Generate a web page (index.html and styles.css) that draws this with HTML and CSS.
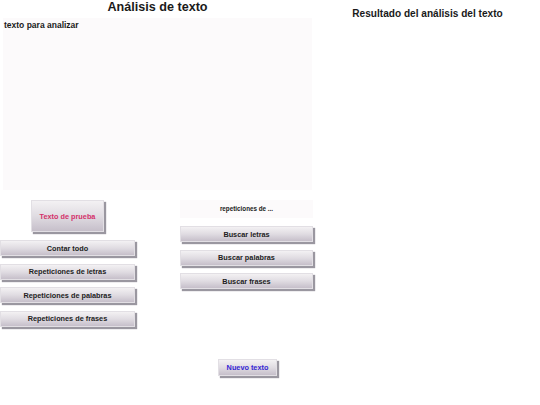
FILE: index.html
```html
<!DOCTYPE html>
<html lang="es">
<head>
<meta charset="utf-8">
<title>Análisis de texto</title>
<link rel="stylesheet" href="styles.css">
</head>
<body>
<div class="page">
  <section class="left">
    <h1 class="title">Análisis de texto</h1>
    <textarea class="input">texto para analizar</textarea>
    <div class="controls">
      <div class="col col-a">
        <button class="btn btn-sample">Texto de prueba</button>
        <button class="btn btn-wide">Contar todo</button>
        <button class="btn btn-wide">Repeticiones de letras</button>
        <button class="btn btn-wide">Repeticiones de palabras</button>
        <button class="btn btn-wide">Repeticiones de frases</button>
      </div>
      <div class="col col-b">
        <div class="field">repeticiones de ...</div>
        <button class="btn btn-wide">Buscar letras</button>
        <button class="btn btn-wide">Buscar palabras</button>
        <button class="btn btn-wide">Buscar frases</button>
        <button class="btn btn-new">Nuevo texto</button>
      </div>
    </div>
  </section>
  <section class="right">
    <h2 class="result-title">Resultado del análisis del texto</h2>
  </section>
</div>
</body>
</html>
```

FILE: styles.css
```css
* { box-sizing: border-box; }
html, body {
  margin: 0;
  padding: 0;
  background: #ffffff;
  font-family: "Liberation Sans", Arial, sans-serif;
  color: #1a1a1a;
}
.page {
  display: flex;
  width: 540px;
  height: 405px;
}
.left {
  width: 315px;
  display: flex;
  flex-direction: column;
}
.right {
  flex: 1;
}
.title {
  margin: 0;
  height: 18px;
  font-size: 12.6px;
  line-height: 15px;
  font-weight: bold;
  text-align: center;
}
.input {
  display: block;
  margin: 0 3px;
  width: 309px;
  height: 172px;
  border: none;
  outline: none;
  resize: none;
  background: #fcfafb;
  font-family: "Liberation Sans", Arial, sans-serif;
  font-weight: bold;
  font-size: 8.5px;
  line-height: 10px;
  padding: 2px 1px;
  color: #1a1a1a;
}
.controls {
  display: flex;
  gap: 45px;
  padding-top: 10px;
}
.col {
  display: flex;
  flex-direction: column;
}
.col-a { width: 135px; gap: 7.5px; }
.col-b { width: 133px; gap: 7.5px; }
.btn {
  font-family: "Liberation Sans", Arial, sans-serif;
  font-weight: bold;
  font-size: 7.3px;
  color: #222;
  border: 1px solid #e2dfe4;
  background: linear-gradient(to bottom, #f3f1f3 0%, #e0dce2 50%, #c6bfca 100%);
  box-shadow: 2px 2px 1px #9a97a0;
  padding: 0;
  margin: 0;
  cursor: pointer;
}
.btn-wide {
  width: 100%;
  height: 16px;
}
.btn-sample {
  align-self: center;
  width: 73px;
  height: 32px;
  color: #d4306a;
  margin-bottom: 0.5px;
}
.field {
  height: 18px;
  background: #fcfafb;
  font-weight: bold;
  font-size: 6.3px;
  line-height: 18px;
  text-align: center;
  margin-bottom: 0.5px;
}
.btn-new {
  align-self: center;
  width: 59px;
  height: 17px;
  margin-top: 62px;
  color: #3526d4;
  position: relative;
  left: 1px;
}
.result-title {
  margin: 0;
  padding-top: 8px;
  font-size: 10.1px;
  line-height: 12px;
  font-weight: bold;
  text-align: center;
}
```
